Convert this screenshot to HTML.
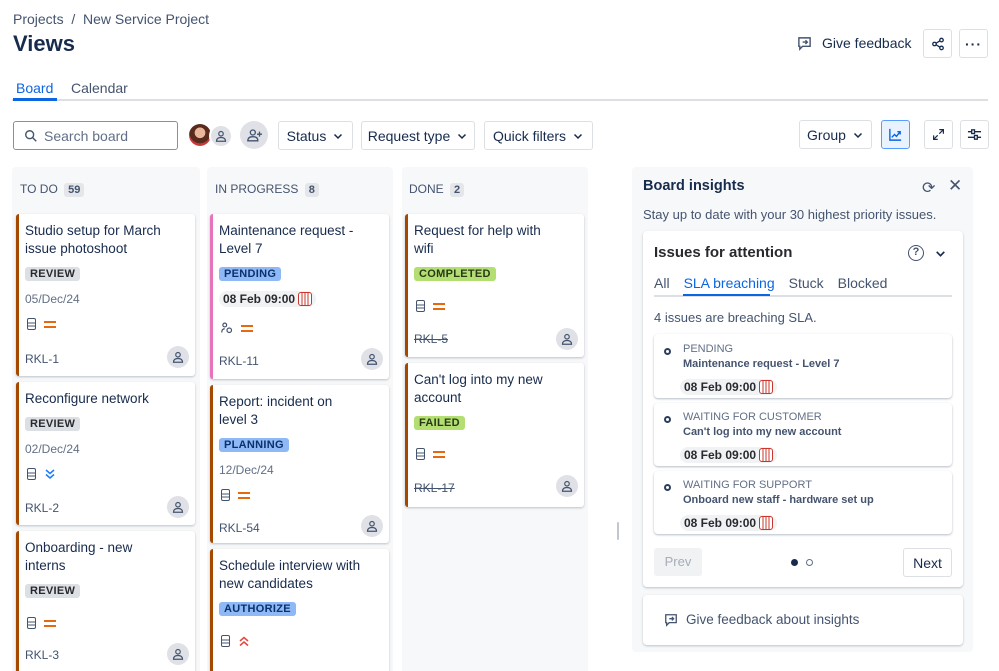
<!DOCTYPE html>
<html><head><meta charset="utf-8"><style>
*{box-sizing:border-box;margin:0;padding:0}
html,body{width:999px;height:671px;overflow:hidden}
body{background:#fff;font-family:"Liberation Sans",sans-serif;color:#172b4d;position:relative}
.a{position:absolute}
.btn{position:absolute;border:1px solid #dcdfe4;border-radius:3px;background:#fff;font-size:14px;color:#172b4d;display:flex;align-items:center;justify-content:center;gap:6px}
.col{position:absolute;top:167px;background:#f7f8f9;border-radius:4px;height:520px}
.colh{position:absolute;top:182px;font-size:12px;color:#44546f}
.cnt{display:inline-block;background:#e4e6ea;border-radius:3px;padding:1px 4px;margin-left:3px;font-weight:bold;font-size:11px;color:#44546f}
.card{position:absolute;background:#fff;border-radius:3px;box-shadow:0 1px 2px rgba(9,30,66,.25);border-left:3px solid #a54800;padding:8px 0 0 6px}
.t{font-size:13.5px;line-height:18px;color:#172b4d;width:150px}
.lz{display:inline-block;font-size:11px;font-weight:bold;padding:1px 5px;border-radius:3px;margin-top:9px;letter-spacing:.3px}
.rev{background:#dcdfe4;color:#292a2e}
.pend{background:#8fb8f6;color:#09326c}
.done{background:#b3df72;color:#2a3818}
.dt{font-size:12px;color:#626f86;margin-top:10px}
.key{position:absolute;left:6px;font-size:12px;color:#44546f}
.av{position:absolute;width:22px;height:22px;border-radius:50%;background:#dfe1e6;display:flex;align-items:center;justify-content:center}
.sla{display:inline-flex;align-items:center;background:#f1f2f4;border-radius:10px;padding:1px 4px;font-size:12px;font-weight:bold;color:#292a2e;gap:3px}
.bars{display:inline-block;width:14px;height:14px;border:1.5px solid #c9372c;border-radius:3px;background:linear-gradient(90deg,#fff 20%,#c9372c 20%,#c9372c 30%,#fff 30%,#fff 45%,#c9372c 45%,#c9372c 55%,#fff 55%,#fff 70%,#c9372c 70%,#c9372c 80%,#fff 80%)}
.ic{position:absolute;display:flex;gap:8px;align-items:center}
.eq{width:12px;height:7px;border-top:2px solid #e56910;border-bottom:2px solid #e56910}
.doc{width:9px;height:12px;border:1.5px solid #44546f;border-radius:2px;background:linear-gradient(#fff 35%,#44546f 35%,#44546f 45%,#fff 45%,#fff 65%,#44546f 65%,#44546f 75%,#fff 75%)}
.it{position:absolute;left:654px;width:298px;background:#fff;border-radius:4px;box-shadow:0 1px 2px rgba(9,30,66,.3)}
</style></head><body>
<svg width="0" height="0" style="position:absolute"><defs><symbol id="ch" viewBox="0 0 12 12"><path d="M2.5 4.5L6 8l3.5-3.5" fill="none" stroke="#172b4d" stroke-width="1.5"/></symbol><symbol id="us" viewBox="0 0 16 16"><g fill="none" stroke="#44546f" stroke-width="1.6"><circle cx="8" cy="5" r="3"/><path d="M2 15c0-4 3-5 6-5s6 1 6 5z"/></g></symbol></defs></svg>
<div class="a" style="left:13px;top:11px;font-size:14px;color:#44546f">Projects &nbsp;/&nbsp; New Service Project</div>
<div class="a" style="left:13px;top:31px;font-size:22px;font-weight:bold">Views</div>
<div class="a" style="left:797px;top:35px;font-size:14px;display:flex;align-items:center;gap:10px"><svg width="15" height="15" viewBox="0 0 16 16" fill="none" stroke="#44546f" stroke-width="1.5"><path d="M2 2h12v9H6l-3 3v-3H2z"/><path d="M6 6.5h5M9 4.5l2 2-2 2"/></svg>Give feedback</div>
<div class="btn" style="left:923px;top:29px;width:29px;height:29px"><svg width="14" height="14" viewBox="0 0 16 16" fill="none" stroke="#172b4d" stroke-width="1.5"><circle cx="4" cy="8" r="2"/><circle cx="12" cy="3.5" r="2"/><circle cx="12" cy="12.5" r="2"/><path d="M6 7l4-2.5M6 9l4 2.5"/></svg></div>
<div class="btn" style="left:959px;top:29px;width:29px;height:29px;font-weight:bold;letter-spacing:1px">···</div>
<div class="a" style="left:16px;top:80px;font-size:14px;color:#0c66e4">Board</div>
<div class="a" style="left:71px;top:80px;font-size:14px;color:#44546f">Calendar</div>
<div class="a" style="left:12px;top:99px;width:976px;height:2px;background:#dcdfe4"></div>
<div class="a" style="left:13px;top:98px;width:44px;height:3px;background:#0c66e4"></div>
<div class="btn" style="left:13px;top:121px;width:165px;height:29px;justify-content:flex-start;padding-left:10px;border-color:#8590a2;color:#626f86"><svg width="14" height="14" viewBox="0 0 16 16" fill="none" stroke="#44546f" stroke-width="1.6"><circle cx="6.5" cy="6.5" r="4.5"/><path d="M10 10l4 4"/></svg>Search board</div>
<div class="a" style="left:189px;top:124px;width:22px;height:22px;border-radius:50%;background:radial-gradient(circle at 50% 40%,#e8b69a 30%,#5a2a1e 32%,#5a2a1e 60%,#c73a3a 62%)"></div>
<div class="av" style="left:209px;top:124px;border:2px solid #fff;width:24px;height:24px"><svg width="12" height="12"><use href="#us"/></svg></div>
<div class="av" style="left:240px;top:121px;width:28px;height:28px"><svg width="15" height="14" viewBox="0 0 18 16" fill="none" stroke="#44546f" stroke-width="1.6"><circle cx="7" cy="5" r="3"/><path d="M1 15c0-4 3-5 6-5s6 1 6 5zM15 4v6M12 7h6"/></svg></div>
<div class="btn" style="left:278px;top:121px;width:75px;height:29px">Status <svg width="12" height="12"><use href="#ch"/></svg></div>
<div class="btn" style="left:361px;top:121px;width:114px;height:29px">Request type <svg width="12" height="12"><use href="#ch"/></svg></div>
<div class="btn" style="left:484px;top:121px;width:109px;height:29px">Quick filters <svg width="12" height="12"><use href="#ch"/></svg></div>
<div class="btn" style="left:799px;top:120px;width:73px;height:29px">Group <svg width="12" height="12"><use href="#ch"/></svg></div>
<div class="btn" style="left:881px;top:120px;width:29px;height:29px;background:#e9f2ff;border-color:#579dff"><svg width="15" height="15" viewBox="0 0 16 16" fill="none" stroke="#0c66e4" stroke-width="1.5"><path d="M2 2v12h12M4 11l3-3 2 2 4-5M10 5h3v3"/></svg></div>
<div class="btn" style="left:924px;top:120px;width:29px;height:29px"><svg width="13" height="13" viewBox="0 0 16 16" fill="none" stroke="#172b4d" stroke-width="1.5"><path d="M9 2h5v5M14 2l-5 5M7 14H2V9M2 14l5-5"/></svg></div>
<div class="btn" style="left:960px;top:120px;width:29px;height:29px"><svg width="15" height="15" viewBox="0 0 16 16" fill="none" stroke="#172b4d" stroke-width="1.4"><path d="M1 5h14M1 11h14"/><rect x="5" y="3" width="3" height="4" fill="#fff"/><rect x="8" y="9" width="3" height="4" fill="#fff"/></svg></div>

<div class="col" style="left:12px;width:188px"></div>
<div class="col" style="left:207px;width:186px"></div>
<div class="col" style="left:402px;width:186px"></div>
<div class="colh" style="left:20px">TO DO <span class="cnt">59</span></div>
<div class="colh" style="left:215px">IN PROGRESS <span class="cnt">8</span></div>
<div class="colh" style="left:409px">DONE <span class="cnt">2</span></div>

<div class="card" style="left:16px;top:214px;width:179px;height:162px"><div class="t">Studio setup for March issue photoshoot</div><div class="lz rev">REVIEW</div><div class="dt">05/Dec/24</div><div class="ic" style="left:8px;top:104px"><div class="doc"></div><div class="eq"></div></div><div class="key" style="top:138px">RKL-1</div><div class="av" style="left:148px;top:132px"><svg width="12" height="12"><use href="#us"/></svg></div></div>
<div class="card" style="left:16px;top:382px;width:179px;height:143px"><div class="t">Reconfigure network</div><div class="lz rev">REVIEW</div><div class="dt">02/Dec/24</div><div class="ic" style="left:8px;top:86px"><div class="doc"></div><svg width="12" height="12" viewBox="0 0 12 12" fill="none" stroke="#1d7afc" stroke-width="1.5"><path d="M2 2l4 3.5L10 2M2 6.5l4 3.5 4-3.5"/></svg></div><div class="key" style="top:119px">RKL-2</div><div class="av" style="left:148px;top:114px"><svg width="12" height="12"><use href="#us"/></svg></div></div>
<div class="card" style="left:16px;top:531px;width:179px;height:150px"><div class="t">Onboarding - new interns</div><div class="lz rev">REVIEW</div><div class="ic" style="left:8px;top:86px"><div class="doc"></div><div class="eq"></div></div><div class="key" style="top:117px">RKL-3</div><div class="av" style="left:148px;top:112px"><svg width="12" height="12"><use href="#us"/></svg></div></div>

<div class="card" style="left:210px;top:214px;width:179px;height:165px;border-left-color:#e774bb"><div class="t">Maintenance request - Level 7</div><div class="lz pend">PENDING</div><div style="margin-top:8px"><span class="sla">08 Feb 09:00 <i class="bars"></i></span></div><div class="ic" style="left:8px;top:108px"><svg width="12" height="12" viewBox="0 0 16 16" fill="none" stroke="#44546f" stroke-width="1.6"><circle cx="5" cy="4" r="2.5"/><path d="M1 14c0-4 2-5 4-5"/><circle cx="11" cy="11" r="3"/></svg><div class="eq"></div></div><div class="key" style="top:140px">RKL-11</div><div class="av" style="left:148px;top:134px"><svg width="12" height="12"><use href="#us"/></svg></div></div>
<div class="card" style="left:210px;top:385px;width:179px;height:158px"><div class="t" style="width:130px">Report: incident on level 3</div><div class="lz pend">PLANNING</div><div class="dt">12/Dec/24</div><div class="ic" style="left:8px;top:104px"><div class="doc"></div><div class="eq"></div></div><div class="key" style="top:136px">RKL-54</div><div class="av" style="left:148px;top:130px"><svg width="12" height="12"><use href="#us"/></svg></div></div>
<div class="card" style="left:210px;top:549px;width:179px;height:140px"><div class="t">Schedule interview with new candidates</div><div class="lz pend">AUTHORIZE</div><div class="ic" style="left:8px;top:86px"><div class="doc"></div><svg width="12" height="12" viewBox="0 0 12 12" fill="none" stroke="#e2483d" stroke-width="1.5"><path d="M2 6l4-3.5L10 6M2 10.5L6 7l4 3.5"/></svg></div></div>

<div class="card" style="left:405px;top:214px;width:179px;height:143px"><div class="t">Request for help with wifi</div><div class="lz done">COMPLETED</div><div class="ic" style="left:8px;top:86px"><div class="doc"></div><div class="eq"></div></div><div class="key" style="top:118px;text-decoration:line-through">RKL-5</div><div class="av" style="left:148px;top:114px"><svg width="12" height="12"><use href="#us"/></svg></div></div>
<div class="card" style="left:405px;top:363px;width:179px;height:144px"><div class="t">Can't log into my new account</div><div class="lz done">FAILED</div><div class="ic" style="left:8px;top:85px"><div class="doc"></div><div class="eq"></div></div><div class="key" style="top:118px;text-decoration:line-through">RKL-17</div><div class="av" style="left:148px;top:112px"><svg width="12" height="12"><use href="#us"/></svg></div></div>

<div class="a" style="left:617px;top:522px;width:2px;height:18px;background:#c1c7d0;border-radius:1px"></div>
<div class="a" style="left:632px;top:167px;width:341px;height:485px;background:#f7f8f9;border-radius:4px"></div>
<div class="a" style="left:643px;top:178px;font-size:14.5px;font-weight:bold">Board insights</div>
<div class="a" style="left:922px;top:178px;font-size:16px;color:#44546f">&#10227;</div>
<div class="a" style="left:948px;top:176px;font-size:17px;color:#44546f">&#10005;</div>
<div class="a" style="left:643px;top:207px;font-size:13px;color:#44546f">Stay up to date with your 30 highest priority issues.</div>
<div class="a" style="left:643px;top:231px;width:320px;height:356px;background:#fff;border-radius:4px;box-shadow:0 1px 2px rgba(9,30,66,.25)"></div>
<div class="a" style="left:654px;top:244px;font-size:15px;font-weight:bold;color:#292a2e">Issues for attention</div>
<div class="a" style="left:908px;top:245px;width:16px;height:16px;border:1.5px solid #44546f;border-radius:50%;font-size:11px;text-align:center;line-height:13px;font-weight:bold;color:#44546f">?</div>
<svg class="a" style="left:934px;top:247px" width="13" height="13"><use href="#ch"/></svg>
<div class="a" style="left:654px;top:275px;font-size:14px;color:#44546f;display:flex;gap:14px"><span>All</span><span style="color:#0c66e4">SLA breaching</span><span>Stuck</span><span>Blocked</span></div>
<div class="a" style="left:654px;top:295px;width:298px;height:2px;background:#dcdfe4"></div>
<div class="a" style="left:683px;top:294px;width:87px;height:2px;background:#0c66e4"></div>
<div class="a" style="left:654px;top:310px;font-size:13px;color:#44546f">4 issues are breaching SLA.</div>

<div class="it" style="top:334px;height:64px"></div>
<div class="it" style="top:403px;height:63px"></div>
<div class="it" style="top:471px;height:63px"></div>
<div class="a" style="left:664px;top:348px;width:7px;height:7px;border:2px solid #2c3e5d;border-radius:50%"></div>
<div class="a" style="left:664px;top:416px;width:7px;height:7px;border:2px solid #2c3e5d;border-radius:50%"></div>
<div class="a" style="left:664px;top:484px;width:7px;height:7px;border:2px solid #2c3e5d;border-radius:50%"></div>
<div class="a" style="left:683px;top:342px;font-size:11px;color:#626f86;line-height:15px">PENDING<br><b style="color:#44546f">Maintenance request - Level 7</b></div>
<div class="a" style="left:683px;top:410px;font-size:11px;color:#626f86;line-height:15px">WAITING FOR CUSTOMER<br><b style="color:#44546f">Can't log into my new account</b></div>
<div class="a" style="left:683px;top:478px;font-size:11px;color:#626f86;line-height:15px">WAITING FOR SUPPORT<br><b style="color:#44546f">Onboard new staff - hardware set up</b></div>
<div class="a" style="left:680px;top:378px"><span class="sla">08 Feb 09:00 <i class="bars"></i></span></div>
<div class="a" style="left:680px;top:446px"><span class="sla">08 Feb 09:00 <i class="bars"></i></span></div>
<div class="a" style="left:680px;top:514px"><span class="sla">08 Feb 09:00 <i class="bars"></i></span></div>
<div class="a" style="left:654px;top:548px;width:48px;height:28px;background:#f1f2f4;border-radius:3px;font-size:13px;color:#a5adba;text-align:center;line-height:28px">Prev</div>
<div class="a" style="left:791px;top:559px;width:7px;height:7px;border-radius:50%;background:#172b4d"></div>
<div class="a" style="left:806px;top:559px;width:7px;height:7px;border-radius:50%;border:1px solid #626f86"></div>
<div class="btn" style="left:903px;top:548px;width:49px;height:29px">Next</div>
<div class="a" style="left:643px;top:595px;width:320px;height:50px;background:#fff;border-radius:4px;box-shadow:0 1px 2px rgba(9,30,66,.25)"></div>
<div class="a" style="left:664px;top:612px;font-size:13.5px;color:#44546f;display:flex;gap:8px;align-items:center"><svg width="14" height="14" viewBox="0 0 16 16" fill="none" stroke="#44546f" stroke-width="1.5"><path d="M2 2h12v9H6l-3 3v-3H2z"/><path d="M6 6.5h5M9 4.5l2 2-2 2"/></svg>Give feedback about insights</div>
</body></html>
